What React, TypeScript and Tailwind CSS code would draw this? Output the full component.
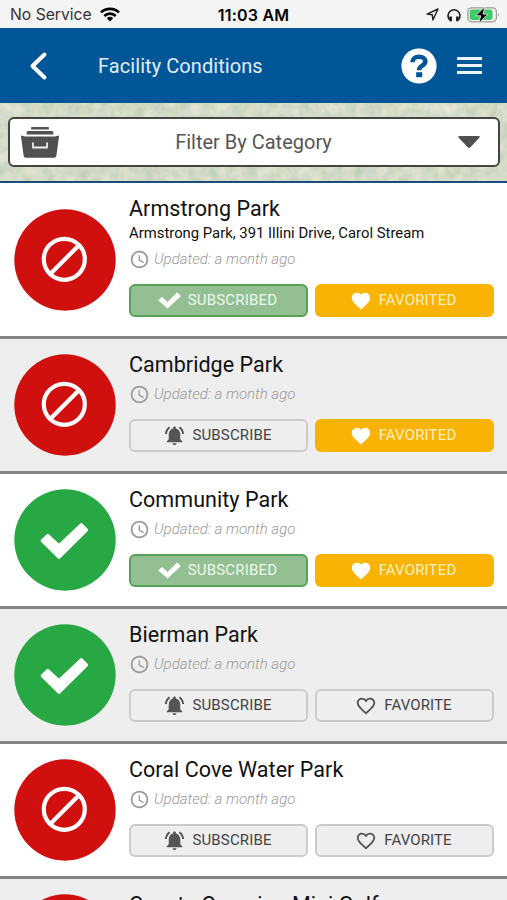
import React from "react";
import { MdAccessTime, MdFavorite, MdFavoriteBorder, MdNotificationsActive } from "react-icons/md";

type Facility = {
  name: string;
  address?: string;
  open: boolean;
  subscribed: boolean;
  favorited: boolean;
};

const facilities: Facility[] = [
  { name: "Armstrong Park", address: "Armstrong Park, 391 Illini Drive, Carol Stream", open: false, subscribed: true, favorited: true },
  { name: "Cambridge Park", open: false, subscribed: false, favorited: true },
  { name: "Community Park", open: true, subscribed: true, favorited: true },
  { name: "Bierman Park", open: true, subscribed: false, favorited: false },
  { name: "Coral Cove Water Park", open: false, subscribed: false, favorited: false },
  { name: "Coyote Crossing Mini Golf", open: false, subscribed: false, favorited: false },
];

function StatusBar() {
  return (
    <div className="grid h-[28px] shrink-0 grid-cols-3 items-center bg-[#f4f4f4] pt-[1px] pr-[7px] pl-[10px] font-['Inter',sans-serif] text-black">
      <div className="flex items-center gap-[8px]">
        <span className="pt-[1px] text-[15.700px] leading-none whitespace-nowrap text-[#333]">No Service</span>
        <svg className="h-[15px] w-[20px]" viewBox="0 0 20 15" fill="none" stroke="#000" strokeWidth="2.7">
          <path d="M1 5.4a13 13 0 0 1 18 0" />
          <path d="M4.3 8.9a8.3 8.3 0 0 1 11.4 0" />
          <path d="M10 14.6l-3.2-3.3a4.7 4.7 0 0 1 6.4 0z" fill="#000" stroke="none" />
        </svg>
      </div>
      <span className="pr-[3px] text-center text-[16px] leading-none font-semibold tracking-[0.2px] whitespace-nowrap">11:03 AM</span>
      <div className="flex items-center justify-end">
        <svg className="mr-[8px] h-[13px] w-[13px]" viewBox="0 0 13 13" fill="none" stroke="#222" strokeWidth="1.4" strokeLinejoin="round">
          <path d="M12 1L1 6.1l5.3.6.6 5.3z" />
        </svg>
        <svg className="mr-[6px] h-[14px] w-[14px]" viewBox="0 0 14 14" fill="none" stroke="#111">
          <path d="M2.3 11.6A6 6 0 1 1 11.7 11.6" strokeWidth="1.5" />
          <path d="M3.6 8.4v4.8M10.4 8.4v4.8" strokeWidth="2.5" />
        </svg>
        <svg className="h-[18px] w-[33px]" viewBox="0 0 33 18">
          <rect x="0.8" y="1.8" width="28.6" height="14" rx="4" fill="#f4f4f4" stroke="#999" strokeWidth="1.2" />
          <rect x="2.6" y="3.6" width="23" height="10.4" rx="2.4" fill="#3fcb67" />
          <path d="M31 6.8q1.8 2 0 4z" fill="#999" />
          <path d="M17.8.8L8.7 9.8h5l-2 7.8 9.1-9.5h-4.8z" fill="#000" stroke="#f4f4f4" strokeWidth="0.8" />
        </svg>
      </div>
    </div>
  );
}

function Header() {
  return (
    <header className="flex h-[75px] shrink-0 items-center bg-[#005697] pr-[25px] pl-[29px] text-white">
      <svg className="h-[30px] w-[20px]" viewBox="0 0 20 30" fill="none" stroke="currentColor" strokeWidth="4" strokeLinecap="round" strokeLinejoin="round">
        <path d="M15.500 3.500L3.500 15 15.500 26.500" />
      </svg>
      <h1 className="ml-[49px] flex-1 text-[20px] leading-none tracking-[0.070px] text-[#e0edf8]">Facility Conditions</h1>
      <svg className="mr-[20px] h-[36px] w-[36px]" viewBox="0 0 36 36">
        <circle cx="18" cy="18" r="17.6" fill="#fff" />
        <path d="M11.500 14.200c0-3.4 2.700-5.500 6.600-5.500 3.700 0 6.200 1.900 6.200 4.700 0 4.400-6.200 4.100-6.200 8.500v.4" fill="none" stroke="#005697" strokeWidth="4.600" />
        <rect x="15.200" y="24.200" width="6" height="5" fill="#005697" />
      </svg>
      <div className="flex w-[25px] flex-col gap-[4px]">
        <span className="h-[3px] bg-[#eef4fb]" />
        <span className="h-[3px] bg-[#eef4fb]" />
        <span className="h-[3px] bg-[#eef4fb]" />
      </div>
    </header>
  );
}

function Grass() {
  return (
    <svg className="absolute inset-0 h-full w-full" aria-hidden="true">
      <filter id="grass" x="0" y="0" width="100%" height="100%" colorInterpolationFilters="sRGB">
        <feTurbulence type="fractalNoise" baseFrequency="0.09 0.08" numOctaves="4" seed="8" />
        <feColorMatrix values="0.2 0 0 0 0.73  0.14 0 0 0 0.79  0.16 0.08 0 0 0.66  0 0 0 0 1" />
      </filter>
      <rect width="100%" height="100%" filter="url(#grass)" />
    </svg>
  );
}

function FilterBar() {
  return (
    <div className="relative h-[80px] shrink-0 border-b-2 border-[#1c4b7c] bg-[#d2dcc9] pt-[14px] pr-[7px] pl-[8px]">
      <Grass />
      <button className="relative flex h-[50px] w-full items-center rounded-[6px] border-[2.500px] border-[#444] bg-white pr-[18px] pl-[11px] text-[#555]">
        <svg className="h-[31px] w-[38px]" viewBox="0 0 38 31" fill="#505050">
          <rect x="10" y="0" width="18" height="2.5" rx="1" />
          <path d="M7 4h24q1.5 0 1.5 3.5h-27Q5.5 4 7 4z" />
          <path d="M.5 8.500L4 9.500h30l3.500-1q.5 0 .5 1l-2.600 19.300q-.3 2-2.200 2H4.800q-1.900 0-2.200-2L0 9.500q0-1 .5-1z" />
          <path d="M12 15.500v5h14v-5" fill="none" stroke="#eee" strokeWidth="1.800" strokeLinejoin="round" />
        </svg>
        <span className="flex-1 pr-[10px] text-center text-[20px] leading-none">Filter By Category</span>
        <svg className="h-[12px] w-[22px]" viewBox="0 0 22 12">
          <path d="M1.200 0h19.600q1.200.3.700 1.500l-9.100 9.700q-1.400 1.400-2.800 0L.5 1.500Q0 .3 1.200 0z" fill="#505050" />
        </svg>
      </button>
    </div>
  );
}

function StatusBadge({ open }: { open: boolean }) {
  return (
    <svg className="h-[102px] w-[102px] shrink-0" viewBox="0 0 102 102">
      <circle cx="51" cy="51" r="50.700" fill={open ? "#28a745" : "#d00f0f"} />
      {open ? (
        <path d="M28.500 51.700L33.800 46.700 45 57 67.300 36 72.300 41 45 68z" fill="#fff" stroke="#fff" strokeWidth="3.600" strokeLinejoin="round" />
      ) : (
        <g fill="none" stroke="#fff" strokeWidth="4.200">
          <circle cx="50.300" cy="50.300" r="20.500" />
          <path d="M65.200 36L36.200 65" />
        </g>
      )}
    </svg>
  );
}

function SubscribeButton({ active }: { active: boolean }) {
  return active ? (
    <button className="flex h-[33px] w-[179px] items-center justify-center rounded-[6px] border-2 border-[#57a158] bg-[#94bf93] pr-[2px] text-[#edf9e9]">
      <svg className="mr-[7px] h-[17px] w-[23px]" viewBox="0 0 23 17">
        <path d="M.7 8.400L3.900 5.300 9.600 10.400 19.200.800 22.400 4.200 9.600 16z" fill="#fff" stroke="#fff" strokeWidth="0.800" strokeLinejoin="round" />
      </svg>
      <span className="text-[15px] leading-none tracking-[0.200px]">SUBSCRIBED</span>
    </button>
  ) : (
    <button className="flex h-[33px] w-[179px] items-center justify-center rounded-[6px] border-2 border-[#cbcbcb] bg-[#eee] pr-[2px] text-[#444]">
      <MdNotificationsActive className="mr-[6px] h-[23px] w-[23px] text-[#555]" />
      <span className="text-[15px] leading-none tracking-[0.150px]">SUBSCRIBE</span>
    </button>
  );
}

function FavoriteButton({ active }: { active: boolean }) {
  return active ? (
    <button className="flex h-[33px] w-[179px] items-center justify-center rounded-[6px] bg-[#f8b304] pr-[3px] text-[#fff0b8]">
      <MdFavorite className="mr-[7px] h-[22px] w-[22px] text-white" />
      <span className="text-[15px] leading-none tracking-[0.150px]">FAVORITED</span>
    </button>
  ) : (
    <button className="flex h-[33px] w-[179px] items-center justify-center rounded-[6px] border-2 border-[#cbcbcb] bg-[#eee] pr-[2px] text-[#444]">
      <MdFavoriteBorder className="mr-[7px] h-[22px] w-[22px] text-[#555]" />
      <span className="text-[15px] leading-none tracking-[0.1px]">FAVORITE</span>
    </button>
  );
}

function FacilityRow({ facility }: { facility: Facility }) {
  return (
    <li className="flex shrink-0 items-center border-b-[3px] border-[#858585] bg-white pl-[14px] even:bg-[#eee]">
      <StatusBadge open={facility.open} />
      <div className="ml-[13px] flex flex-col pt-[13px] pb-[19px]">
        <h2 className="h-[26px] text-[21.500px] leading-[26px] tracking-[0.050px] whitespace-nowrap text-[#111]">{facility.name}</h2>
        {facility.address && (
          <p className="mt-[1px] h-[20px] text-[14.850px] leading-[20px] whitespace-nowrap text-[#111]">{facility.address}</p>
        )}
        <div className="mt-[6px] flex h-[20px] items-center">
          <MdAccessTime className="mr-[4px] h-[21px] w-[21px] text-[#999]" />
          <span className="pt-[1px] text-[15px] leading-none font-light whitespace-nowrap text-[#999] italic">Updated: a month ago</span>
        </div>
        <div className="mt-[15px] flex gap-[7px]">
          <SubscribeButton active={facility.subscribed} />
          <FavoriteButton active={facility.favorited} />
        </div>
      </div>
    </li>
  );
}

export default function App() {
  return (
    <main className="flex h-[900px] w-[507px] flex-col overflow-hidden bg-white font-['Roboto',sans-serif]">
      <StatusBar />
      <Header />
      <FilterBar />
      <ul className="flex flex-col">
        {facilities.map((facility) => (
          <FacilityRow key={facility.name} facility={facility} />
        ))}
      </ul>
    </main>
  );
}
